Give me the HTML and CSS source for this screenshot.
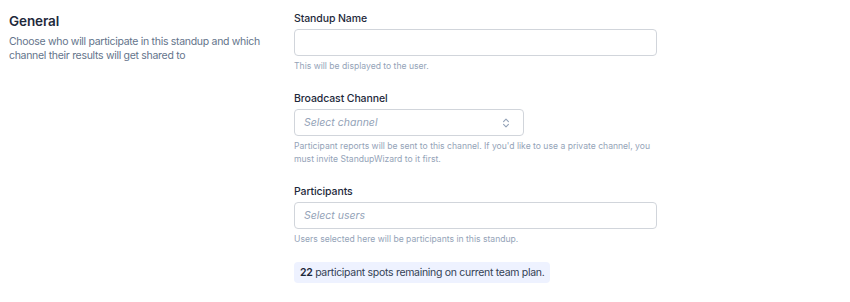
FILE: index.html
```html
<!DOCTYPE html>
<html lang="en">
<head>
    <meta charset="UTF-8">
    <meta name="viewport" content="width=device-width, initial-scale=1.0">
    <title>Standup settings</title>
    <link rel="stylesheet" href="styles.css">
</head>
<body>
    <div class="section">
        <div class="intro">
            <h2 class="title">General</h2>
            <p class="desc">Choose who will participate in this standup and which channel their results will get shared to</p>
        </div>
        <div class="fields">
            <div class="field">
                <label class="label">Standup Name</label>
                <input class="input" type="text">
                <p class="help">This will be displayed to the user.</p>
            </div>
            <div class="field">
                <label class="label">Broadcast Channel</label>
                <div class="select">
                    <span class="placeholder">Select channel</span>
                    <svg class="chevrons" viewBox="0 0 20 20" fill="none" stroke="currentColor" stroke-width="1.6" stroke-linecap="round" stroke-linejoin="round"><path d="M6.5 8L10 4.5 13.5 8M13.5 12L10 15.5 6.5 12"/></svg>
                </div>
                <p class="help">Participant reports will be sent to this channel. If you'd like to use a private channel, you must invite StandupWizard to it first.</p>
            </div>
            <div class="field">
                <label class="label">Participants</label>
                <div class="select wide">
                    <span class="placeholder">Select users</span>
                </div>
                <p class="help">Users selected here will be participants in this standup.</p>
            </div>
            <div class="notice"><b>22</b> participant spots remaining on current team plan.</div>
        </div>
    </div>
</body>
</html>
```

FILE: styles.css
```css
body { margin: 0; background: #fff; font-family: Inter, "Liberation Sans", sans-serif; color: #1e293b; }
.section { display: grid; grid-template-columns: 285px 363px; padding: 11px 0 0 9px; }
.title { margin: 0 0 4px; font-size: 13.5px; line-height: 20px; font-weight: 600; color: #1e293b; letter-spacing: -0.1px; }
.desc { margin: 0; font-size: 10.5px; line-height: 14px; color: #64748b; letter-spacing: -0.3px; }
.fields { padding-top: 1px; }
.field { margin-bottom: 19px; }
.label { display: block; margin-bottom: 3px; font-size: 10.5px; line-height: 14px; font-weight: 500; color: #1e293b; letter-spacing: -0.1px; }
.input { display: block; box-sizing: border-box; width: 100%; height: 27px; margin: 0; border: 1px solid #d1d5db; border-radius: 4px; outline: none; }
.select { box-sizing: border-box; width: 230px; height: 27px; display: flex; align-items: center; justify-content: space-between; padding: 0 9px; border: 1px solid #d1d5db; border-radius: 4px; }
.select.wide { width: 100%; }
.placeholder { font-size: 10.5px; font-style: italic; color: #94a3b8; }
.chevrons { width: 14px; height: 14px; color: #94a3b8; margin-right: 1px; }
.help { margin: 4px 0 0; font-size: 8.6px; line-height: 13px; color: #94a3b8; }
.notice { width: fit-content; padding: 0 6px; height: 21px; line-height: 21px; margin-top: -3px; border-radius: 4px; background: #eef2ff; font-size: 10.5px; color: #334155; letter-spacing: -0.3px; }
.notice b { font-weight: 600; color: #1e293b; }
```
